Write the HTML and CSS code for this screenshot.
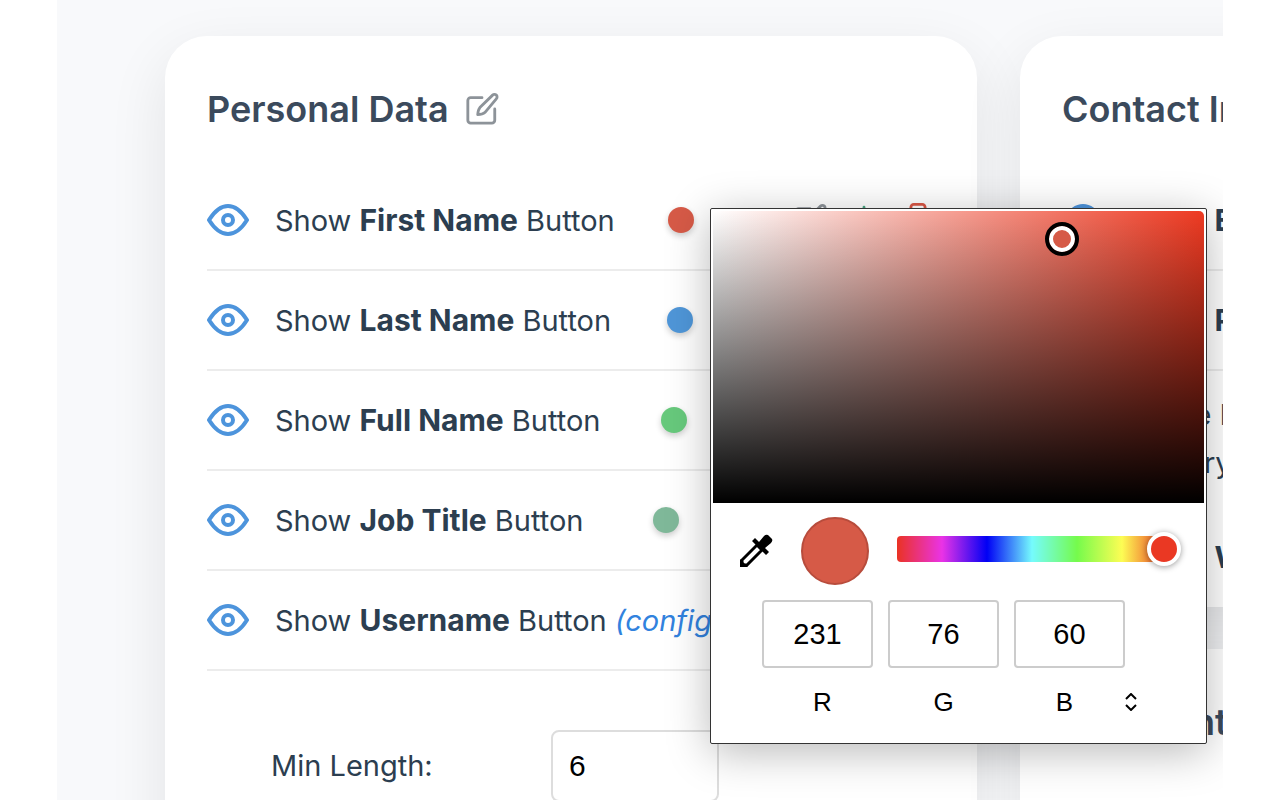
FILE: index.html
```html
<!DOCTYPE html>
<html lang="en">
<head>
    <meta charset="UTF-8">
    <meta name="viewport" content="width=device-width, initial-scale=1.0">
    <title>Settings</title>
    <link rel="stylesheet" href="styles.css">
</head>
<body>
    <svg class="symbols" aria-hidden="true">
        <symbol id="icon-eye" viewBox="0 0 42 32">
            <path d="M2 16C7 8 13 2 21 2s14 6 19 14c-5 8-11 14-19 14S7 24 2 16z"/>
            <circle cx="21" cy="16" r="5"/>
        </symbol>
        <symbol id="icon-edit" viewBox="0 0 24 24">
            <path d="M12 4H4a2 2 0 0 0-2 2v14a2 2 0 0 0 2 2h15a2 2 0 0 0 2-2v-8"/>
            <path d="M19.500 2.200a1.800 1.800 0 0 1 2.600 2.600L14 14.500q-1.500 1.300-5 1.500.2-3.500 1.500-5z"/>
        </symbol>
        <symbol id="icon-download" viewBox="0 0 24 24">
            <path d="M12 3v12M7 10l5 5 5-5M3 16v5h18v-5"/>
        </symbol>
        <symbol id="icon-trash" viewBox="0 0 24 24">
            <path d="M3 6h18M7 6V3a2 2 0 0 1 2-2h6a2 2 0 0 1 2 2v3M5 6v14a2 2 0 0 0 2 2h10a2 2 0 0 0 2-2V6"/>
        </symbol>
    </svg>

    <main class="page">
        <div class="columns">
            <section class="card">
                <header class="card-header">
                    <h2>Personal Data</h2>
                    <button class="icon-btn" type="button" aria-label="Rename"><svg class="icon"><use href="#icon-edit"/></svg></button>
                </header>
                <div class="row">
                    <button class="icon-btn" type="button" aria-label="Toggle First Name"><svg class="eye"><use href="#icon-eye"/></svg></button>
                    <div class="row-body">
                        <span>Show <b>First Name</b> Button</span>
                        <button class="dot red" type="button" aria-label="Color"></button>
                        <div class="actions">
                            <button class="icon-btn" type="button" aria-label="Edit"><svg class="icon"><use href="#icon-edit"/></svg></button>
                            <button class="icon-btn green-icon" type="button" aria-label="Download"><svg class="icon"><use href="#icon-download"/></svg></button>
                            <button class="icon-btn red-icon" type="button" aria-label="Delete"><svg class="icon"><use href="#icon-trash"/></svg></button>
                        </div>
                    </div>
                </div>
                <div class="row">
                    <button class="icon-btn" type="button" aria-label="Toggle Last Name"><svg class="eye"><use href="#icon-eye"/></svg></button>
                    <div class="row-body">
                        <span>Show <b>Last Name</b> Button</span>
                        <button class="dot blue" type="button" aria-label="Color"></button>
                        <div class="actions"></div>
                    </div>
                </div>
                <div class="row">
                    <button class="icon-btn" type="button" aria-label="Toggle Full Name"><svg class="eye"><use href="#icon-eye"/></svg></button>
                    <div class="row-body">
                        <span>Show <b>Full Name</b> Button</span>
                        <button class="dot green" type="button" aria-label="Color"></button>
                        <div class="actions"></div>
                    </div>
                </div>
                <div class="row">
                    <button class="icon-btn" type="button" aria-label="Toggle Job Title"><svg class="eye"><use href="#icon-eye"/></svg></button>
                    <div class="row-body">
                        <span>Show <b>Job Title</b> Button</span>
                        <button class="dot sage" type="button" aria-label="Color"></button>
                        <div class="actions"></div>
                    </div>
                </div>
                <div class="row">
                    <button class="icon-btn" type="button" aria-label="Toggle Username"><svg class="eye"><use href="#icon-eye"/></svg></button>
                    <div class="row-body">
                        <span>Show <b>Username</b> Button <a class="config" href="#username">(config)</a></span>
                    </div>
                </div>
                <div class="option" id="username">
                    <label for="min-length">Min Length:</label>
                    <input type="number" id="min-length" value="6">
                </div>
            </section>

            <div class="stack">
                <section class="card">
                    <header class="card-header">
                        <h2>Contact Info</h2>
                    </header>
                    <div class="row">
                        <button class="icon-btn" type="button" aria-label="Toggle Email"><svg class="eye"><use href="#icon-eye"/></svg></button>
                        <span>Show <b>Email</b> Button</span>
                    </div>
                    <div class="row">
                        <button class="icon-btn" type="button" aria-label="Toggle Phone"><svg class="eye"><use href="#icon-eye"/></svg></button>
                        <span>Show <b>Phone</b> Button</span>
                    </div>
                    <p class="note">Include In<br>Glossary</p>
                    <div class="row last">
                        <button class="icon-btn" type="button" aria-label="Toggle Website"><svg class="eye"><use href="#icon-eye"/></svg></button>
                        <span>Show <b>Website</b> Button</span>
                    </div>
                </section>
                <section class="card">
                    <header class="card-header">
                        <h2>Shipment</h2>
                    </header>
                    <div class="row last">
                        <button class="icon-btn" type="button" aria-label="Toggle Address"><svg class="eye"><use href="#icon-eye"/></svg></button>
                    </div>
                </section>
            </div>
        </div>

        <div class="picker">
            <div class="shade"><span class="shade-handle"></span></div>
            <div class="picker-tools">
                <button class="dropper" type="button" aria-label="Pick from screen">
                    <svg viewBox="0 0 34 34">
                        <path d="M3 31v-5L18 11l5 5L8 31z" fill="none" stroke="#000" stroke-width="3"/>
                        <path d="M1 33v-8l8 8zM13 7l3-3 4 4 5-6q2-2 4-1l4 4q1 2-1 4l-6 5 4 4-3 3z"/>
                    </svg>
                </button>
                <span class="swatch"></span>
                <input class="hue" type="range" min="0" max="360" value="360" aria-label="Hue">
            </div>
            <div class="channels">
                <input type="text" id="channel-r" value="231">
                <input type="text" id="channel-g" value="76">
                <input type="text" id="channel-b" value="60">
            </div>
            <div class="channel-names">
                <label for="channel-r">R</label>
                <label for="channel-g">G</label>
                <label for="channel-b">B</label>
                <button class="switch" type="button" aria-label="Change format">
                    <svg viewBox="0 0 12 18"><path d="M1 6l5-5 5 5M1 12l5 5 5-5"/></svg>
                </button>
            </div>
        </div>
    </main>
</body>
</html>
```

FILE: styles.css
```css
* {
    box-sizing: border-box;
}
body {
    margin: 0;
    background-color: #fff;
    color: #2c3e50;
    font-family: Inter, "Liberation Sans", sans-serif;
    font-size: 29px;
    line-height: 48px;
}
button {
    padding: 0;
    border: none;
    background: none;
    cursor: pointer;
}
b {
    font-size: 30px;
}
.symbols {
    display: none;
}
.page {
    position: relative;
    height: 100vh;
    margin: 0 57px;
    padding: 36px 108px;
    overflow: hidden;
    background-color: #f8f9fb;
}
.columns {
    display: grid;
    grid-template-columns: repeat(2, calc(100% - 138px));
    gap: 43px;
}
.stack {
    display: flex;
    flex-direction: column;
    gap: 42px;
}
.card {
    padding: 0 42px;
    border-radius: 42px;
    background-color: #fff;
    box-shadow: 0 20px 60px rgba(0, 0, 0, 0.09);
}
.card-header {
    display: flex;
    align-items: center;
    gap: 16px;
    height: 135px;
    padding-top: 26px;
    padding-bottom: 15px;
}
.card-header h2 {
    margin: 0;
    color: #3b4a5c;
    font-size: 36px;
    font-weight: 600;
    white-space: nowrap;
}

/* rows */
.row {
    display: flex;
    align-items: center;
    gap: 26px;
    height: 100px;
    border-bottom: 2px solid #ececec;
    white-space: nowrap;
}
.row.last {
    border-bottom: none;
}
.row-body {
    display: flex;
    flex: 1;
    align-items: center;
    justify-content: space-between;
}
.icon-btn {
    display: flex;
    color: #8d9399;
}
.icon,
.eye {
    width: 34px;
    height: 34px;
    fill: none;
    stroke: currentColor;
    stroke-width: 2;
    stroke-linecap: round;
    stroke-linejoin: round;
    overflow: visible;
}
.eye {
    width: 42px;
    height: 32px;
    color: #4d94dc;
    stroke-width: 4;
}
.green-icon {
    color: #4ba583;
}
.red-icon {
    color: #d95745;
}
.actions {
    display: flex;
    justify-content: flex-end;
    gap: 20px;
    width: 187px;
}
.dot {
    width: 26px;
    height: 26px;
    border-radius: 50%;
    box-shadow: 0 3px 6px rgba(0, 0, 0, 0.2);
}
.red {
    background-color: #d65a47;
}
.blue {
    background-color: #4f96d8;
}
.green {
    background-color: #67c97c;
}
.sage {
    background-color: #7fb899;
}
.config {
    color: #3182de;
    font-style: italic;
    text-decoration: none;
}
.note {
    margin: 0;
    padding: 20px 0 20px 49px;
    white-space: nowrap;
}
.option {
    display: flex;
    align-items: center;
    padding: 59px 0 59px 64px;
}
.option label {
    width: 280px;
}
.option input {
    width: 168px;
    height: 72px;
    padding: 0 16px;
    border: 2px solid #ddd;
    border-radius: 8px;
    color: #000;
    font: 30px "Liberation Sans", Arial, sans-serif;
}

/* color picker popup */
.picker {
    position: absolute;
    top: 208px;
    left: 653px;
    width: 497px;
    padding: 2px 2px 17px;
    border: 1px solid #333;
    border-radius: 2px;
    background-color: #fff;
    color: #000;
    font-family: "Liberation Sans", Arial, sans-serif;
    box-shadow: 0 8px 44px rgba(0, 0, 0, 0.28);
}
.shade {
    position: relative;
    height: 292px;
    border-radius: 5px 5px 0 0;
    background: linear-gradient(to top, #000, transparent), linear-gradient(to right, #fff, #ee3a22);
}
.shade-handle {
    position: absolute;
    top: 11px;
    left: 332px;
    width: 34px;
    height: 34px;
    border: 4px solid #000;
    border-radius: 50%;
    background-color: #d65a47;
    box-shadow: inset 0 0 0 4px #fff;
}
.picker-tools {
    display: flex;
    align-items: center;
    height: 96px;
    margin-bottom: 1px;
    padding: 0 23px 0 26px;
}
.dropper svg {
    display: block;
    width: 34px;
    height: 34px;
}
.swatch {
    width: 68px;
    height: 68px;
    margin: 0 28px;
    border: 2px solid #b84c3c;
    border-radius: 50%;
    background-color: #d65a47;
}
.hue {
    flex: 1;
    min-width: 0;
    height: 34px;
    margin: 0 0 4px;
    background: none;
    appearance: none;
}
.hue::-webkit-slider-runnable-track {
    height: 26px;
    border-radius: 4px;
    background: linear-gradient(to right, #ea3323, #ea33e6, #0000f5, #75fbfd, #75fb4c, #fdfd54, #ea3323) 0 0 / 270px 26px no-repeat;
}
.hue::-webkit-slider-thumb {
    width: 34px;
    height: 34px;
    margin-top: -4px;
    border: 4px solid #fff;
    border-radius: 50%;
    background-color: #ea3823;
    box-shadow: 0 1px 6px rgba(0, 0, 0, 0.4);
    appearance: none;
}
.channels {
    display: flex;
    gap: 15px;
    padding-left: 49px;
}
.channels input {
    width: 111px;
    height: 68px;
    border: 2px solid #ccc;
    border-radius: 4px;
    color: #000;
    font: 29px "Liberation Sans", Arial, sans-serif;
    text-align: center;
}
.channel-names {
    display: flex;
    padding: 10px 0 0 49px;
    font-size: 26px;
}
.channel-names label {
    width: 121px;
    text-align: center;
}
.switch svg {
    display: block;
    width: 12px;
    height: 18px;
    fill: none;
    stroke: #000;
    stroke-width: 2;
}
```
